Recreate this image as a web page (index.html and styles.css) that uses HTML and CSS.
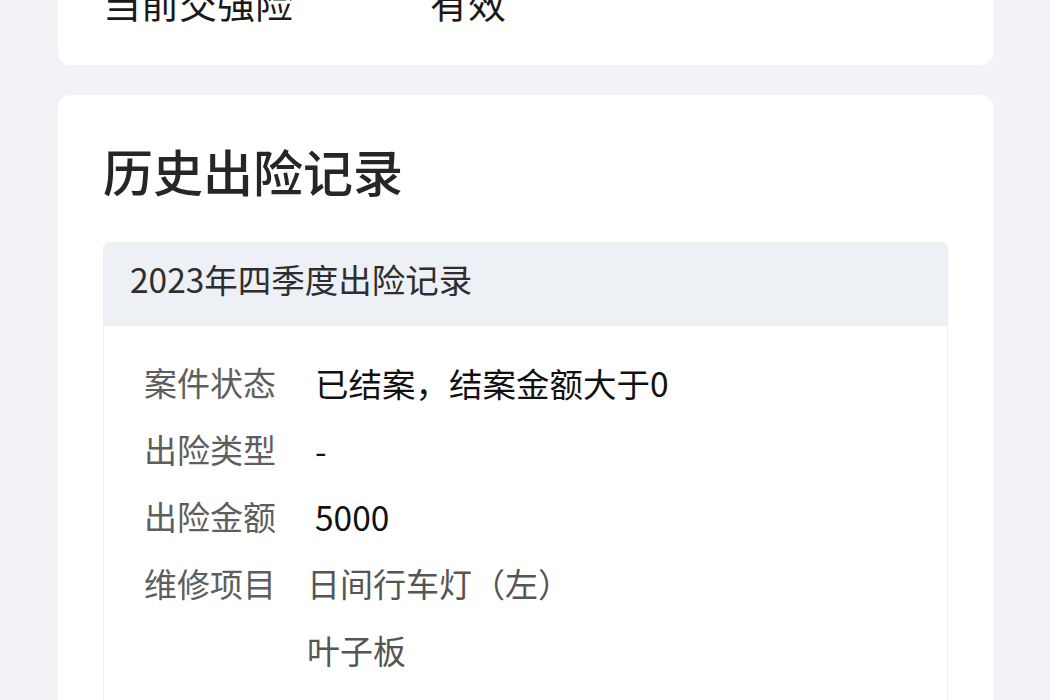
FILE: index.html
```html
<!DOCTYPE html>
<html lang="zh-CN">

<head>
    <meta charset="UTF-8">
    <meta name="viewport" content="width=device-width, initial-scale=1.0">
    <title>出险记录</title>
    <link rel="stylesheet" href="styles.css">
</head>

<body>
    <div class="page">
        <div class="card card-top">
            <div class="info-row">
                <span class="info-label">当前交强险</span>
                <span class="info-value">有效</span>
            </div>
        </div>

        <div class="card">
            <h2 class="card-title">历史出险记录</h2>

            <div class="record">
                <div class="record-head">2023年四季度出险记录</div>
                <div class="record-body">
                    <div class="field">
                        <span class="field-label">案件状态</span>
                        <span class="field-value">已结案，结案金额大于0</span>
                    </div>
                    <div class="field">
                        <span class="field-label">出险类型</span>
                        <span class="field-value">-</span>
                    </div>
                    <div class="field">
                        <span class="field-label">出险金额</span>
                        <span class="field-value">5000</span>
                    </div>
                    <div class="field">
                        <span class="field-label">维修项目</span>
                        <div class="field-list">
                            <span>日间行车灯（左）</span>
                            <span>叶子板</span>
                        </div>
                    </div>
                </div>
            </div>
        </div>
    </div>
</body>

</html>
```

FILE: styles.css
```css
* {
    box-sizing: border-box;
    margin: 0;
    padding: 0;
    font-family: "Noto Sans CJK SC", "Noto Sans", sans-serif;
}

body {
    background: #f2f3f6;
    height: 100vh;
    overflow: hidden;
}

.page {
    padding: 0 57px 0 58px;
}

.card {
    background: #ffffff;
    border-radius: 12px;
    padding: 45px 45px 40px;
    margin-top: 30px;
}

.card-top {
    margin-top: -40px;
    padding: 17px 45px 38px;
}

.info-row {
    display: flex;
    line-height: 50px;
    font-size: 38px;
    color: #1a1a1a;
}

.info-label {
    width: 327px;
}

.card-title {
    font-size: 50px;
    font-weight: 500;
    line-height: 60px;
    color: #262626;
    margin-bottom: 42px;
}

.record {
    border: 1px solid #eceef1;
    border-radius: 6px 6px 0 0;
    overflow: hidden;
}

.record-head {
    background: #edf0f5;
    height: 83px;
    line-height: 72px;
    padding-left: 26px;
    font-size: 33.5px;
    color: #2e2e2e;
}

.record-body {
    padding: 23px 0 30px 40px;
}

.field {
    display: flex;
    font-size: 33px;
    line-height: 67px;
}

.field-label {
    width: 171px;
    flex-shrink: 0;
    color: #5e5e5e;
}

.field-value {
    font-size: 33.5px;
    color: #111111;
}

.field-list {
    display: flex;
    flex-direction: column;
    margin-left: -8px;
    color: #555555;
}
```
